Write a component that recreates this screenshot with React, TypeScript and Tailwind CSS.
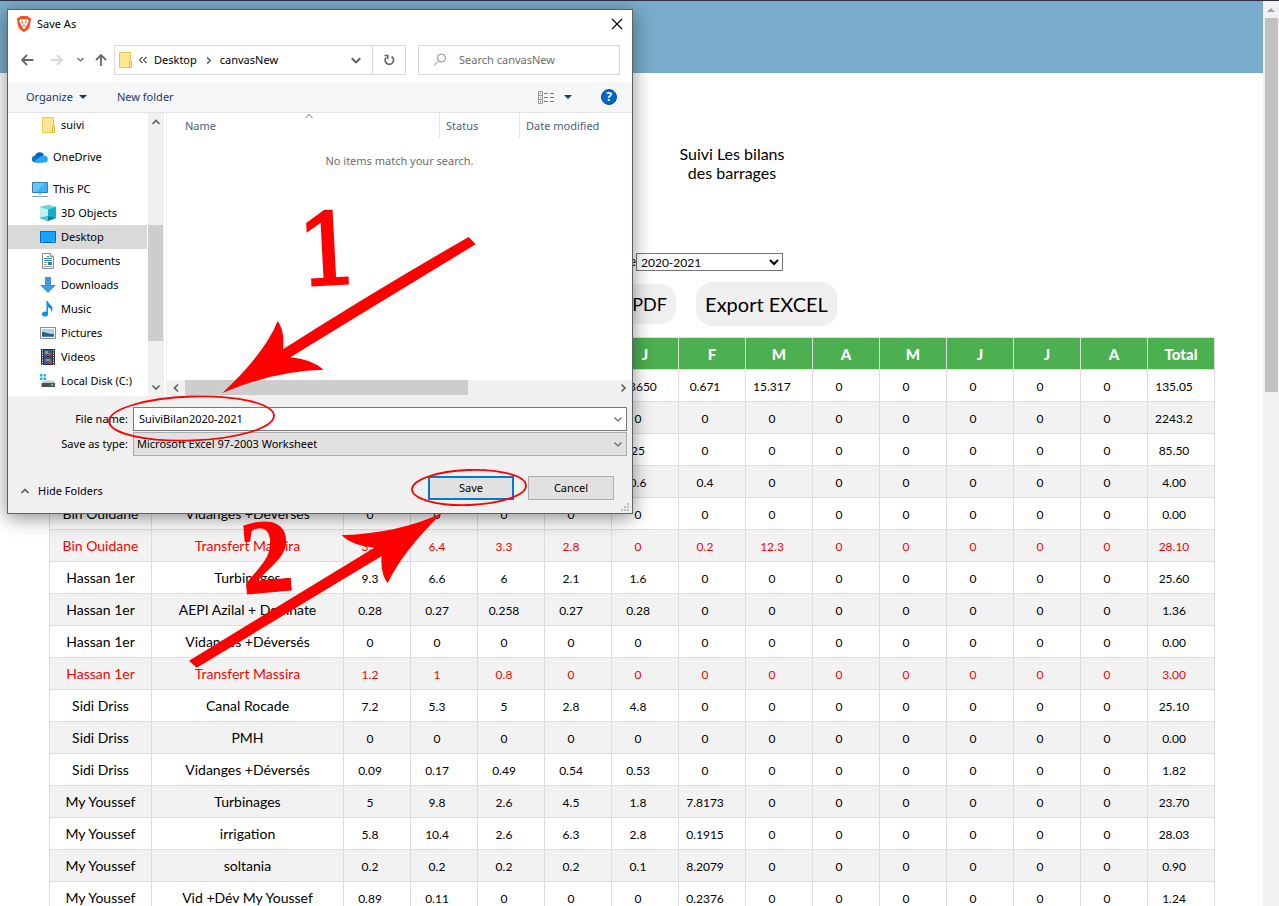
import React from "react";

type Row = { dam: string; use: string; values: string[]; total: string; highlight?: boolean };

const months = ["S", "O", "N", "D", "J", "F", "M", "A", "M", "J", "J", "A"];

const fill = (...v: string[]) => [...v, ...Array(12 - v.length).fill("0")];

const rows: Row[] = [
  { dam: "", use: "", values: fill("", "", "", "", "6.3650", "0.671", "15.3170"), total: "135.05" },
  { dam: "", use: "", values: fill("", "", "", ""), total: "2243.20" },
  { dam: "", use: "", values: fill("", "", "", "", "25"), total: "85.50" },
  { dam: "", use: "", values: fill("", "", "", "", "0.6", "0.4"), total: "4.00" },
  { dam: "Bin Ouidane", use: "Vidanges +Déversés", values: fill(), total: "0.00" },
  { dam: "Bin Ouidane", use: "Transfert Massira", values: fill("3.1", "6.4", "3.3", "2.8", "0", "0.2", "12.3"), total: "28.10", highlight: true },
  { dam: "Hassan 1er", use: "Turbinages", values: fill("9.3", "6.6", "6", "2.1", "1.6"), total: "25.60" },
  { dam: "Hassan 1er", use: "AEPI Azilal + Demnate", values: fill("0.28", "0.27", "0.258", "0.27", "0.28"), total: "1.36" },
  { dam: "Hassan 1er", use: "Vidanges +Déversés", values: fill(), total: "0.00" },
  { dam: "Hassan 1er", use: "Transfert Massira", values: fill("1.2", "1", "0.8"), total: "3.00", highlight: true },
  { dam: "Sidi Driss", use: "Canal Rocade", values: fill("7.2", "5.3", "5", "2.8", "4.8"), total: "25.10" },
  { dam: "Sidi Driss", use: "PMH", values: fill(), total: "0.00" },
  { dam: "Sidi Driss", use: "Vidanges +Déversés", values: fill("0.09", "0.17", "0.49", "0.54", "0.53"), total: "1.82" },
  { dam: "My Youssef", use: "Turbinages", values: fill("5", "9.8", "2.6", "4.5", "1.8", "7.8173"), total: "23.70" },
  { dam: "My Youssef", use: "irrigation", values: fill("5.8", "10.4", "2.6", "6.3", "2.8", "0.1915"), total: "28.03" },
  { dam: "My Youssef", use: "soltania", values: fill("0.2", "0.2", "0.2", "0.2", "0.1", "8.2079"), total: "0.90" },
  { dam: "My Youssef", use: "Vid +Dév My Youssef", values: fill("0.89", "0.11", "0", "0", "0", "0.2376"), total: "1.24" },
];

function BalanceTable() {
  const cell = "w-[38px] bg-transparent text-center text-[12px] leading-4 outline-none block mt-[3px]";
  return (
    <table className="w-full table-fixed border-collapse text-center text-[14px] leading-5">
      <colgroup>
        <col className="w-[102px]" />
        <col className="w-[192px]" />
        {[...months, "Total"].map((_, i) => (
          <col key={i} />
        ))}
      </colgroup>
      <thead>
        <tr className="h-8 bg-[#4caf50] text-[15px] text-white">
          {["", "", ...months, "Total"].map((m, i) => (
            <th key={i} className="border border-[#ddd] font-black">
              {m}
            </th>
          ))}
        </tr>
      </thead>
      <tbody>
        {rows.map((r, i) => (
          <tr key={i} className={r.highlight ? "h-8 text-[#f00] even:bg-[#f2f2f2]" : "h-8 text-black even:bg-[#f2f2f2]"}>
            <td className="border border-[#ddd]">{r.dam}</td>
            <td className="border border-[#ddd]">{r.use}</td>
            {[...r.values, r.total].map((v, j) => (
              <td key={j} className="border border-[#ddd] px-[7px]">
                <input
                  className={cell}
                  aria-label={`${r.dam} ${r.use} ${j < 12 ? months[j] : "Total"}`}
                  defaultValue={v}
                />
              </td>
            ))}
          </tr>
        ))}
      </tbody>
    </table>
  );
}

function Chevron({ dir, className, thin }: { dir: "up" | "down" | "left" | "right"; className?: string; thin?: boolean }) {
  const d = { up: "M1.5 7 5 3.5 8.5 7", down: "M1.5 3.5 5 7l3.5-3.5", left: "M7 1.5 3.5 5 7 8.5", right: "M3.5 1.5 7 5 3.5 8.5" }[dir];
  return (
    <svg
      viewBox="0 0 10 10"
      className={className ?? "size-[10px]"}
      fill="none"
      stroke="#606060"
      strokeWidth={thin ? 1.1 : 1.7}
      aria-hidden="true"
    >
      <path d={d} />
    </svg>
  );
}

const icons: Record<string, React.ReactNode> = {
  folder: (
    <>
      <path d="M2.5 .5h11v15h-11z" fill="#ffe693" stroke="#eac54f" />
      <path d="M12.5 9.5h2v6h-2z" fill="#ffe693" stroke="#e3b93c" />
    </>
  ),
  cloud: (
    <>
      <path d="M3 7a5 5 0 0 1 9-1.5L8 10z" fill="#0364b8" />
      <path d="M3.5 6.4 11 11l-1 2.5H3.500A3.500 3.500 0 0 1 3.500 6.4z" fill="#0078d4" />
      <path d="M10 6.400a4 4 0 0 1 3 .4 3.400 3.400 0 0 1 0 6.700H4.500c-1 0-1.800-.3-2.500-.9z" fill="#28a8ea" />
    </>
  ),
  pc: (
    <>
      <path d="M.5 1.500h15v10H.5z" fill="#3ab3fb" stroke="#3a7ca8" />
      <path d="M1 2h12L4 11H1z" fill="#6fd0ff" opacity=".7" />
      <path d="M6 13h4M0 15.500h16" stroke="#8a9aa8" />
    </>
  ),
  cube: (
    <>
      <path d="M8 0 16 2v11l-8 3-8-3V2z" fill="#2bc3d6" />
      <path d="M8 0 16 2 8 4.500 0 2z" fill="#69d6df" />
      <path d="M0 2l8 2.500V12l-8 1z" fill="#bdf0f2" />
      <path d="M8 4.500 16 2v11l-8-1z" fill="#1aaecb" />
      <path d="M0 13l8-2 8 2-8 3z" fill="#0e7f96" />
      <path d="M0 13l8-2v5z" fill="#52c9cf" />
    </>
  ),
  desktop: (
    <>
      <path d="M.5 2.500h15v11H.5z" fill="#16a4fb" stroke="#0a68b8" />
      <path d="M2 12.500h1M12 12.500h1M14 12.500h1" stroke="#bfe6ff" />
    </>
  ),
  doc: (
    <>
      <path d="M2.500 .5h8l3 3v12h-11z" fill="#fff" stroke="#8a8a8a" />
      <path d="M10.500 .5v3h3" fill="#ddd" stroke="#8a8a8a" />
      <path d="M7 3.500h2M4 5.500h8M4 7.500h8" stroke="#2f8fd0" />
      <path d="M4 9.500h3M4 11.500h3M4 13.500h8" stroke="#8f9ea8" />
      <path d="M8 9h4v3H8z" fill="#2f7ea8" />
    </>
  ),
  download: <path d="M5.500 .5h5v8h4.500L8 15.500 1 8.500h4.500z" fill="#3e9bea" stroke="#2d7cc6" strokeWidth=".8" />,
  music: (
    <>
      <path d="M6.500 0H8c0 3 4.500 4 4.500 7.500 0 1.500-.6 2.600-1.500 3.500.5-2.500-.5-4-3-4.800V13H6.500z" fill="#0f8fe8" />
      <ellipse cx="5" cy="13" rx="3" ry="2.600" fill="#0f8fe8" />
    </>
  ),
  picture: (
    <>
      <path d="M.5 2.500h15v11H.5z" fill="#fff" stroke="#8c8c8c" />
      <path d="M2 4h12v8H2z" fill="#a8d4ec" />
      <path d="M2 7c4 0 5 2 12 2v3H2z" fill="#31646b" />
      <path d="M2 11h12v1H2z" fill="#4d87ad" />
    </>
  ),
  video: (
    <>
      <path d="M1 0h14v16H1z" fill="#333" />
      <path d="M4 1h8v6.500H4z" fill="#345c9c" />
      <path d="M4 8.500h8V15H4z" fill="#345c9c" />
      <path d="M5 2h3v3H5zM6 10h4v2H6z" fill="#c8902c" />
      <path d="M8 4h3v2H8zM9 12h3v2H9z" fill="#bd5437" />
      <path d="M2.500 1v15M13.500 1v15" stroke="#eee" strokeDasharray="1.200 1.200" />
    </>
  ),
  disk: (
    <>
      <path d="M0 1h2.500v2.500H0zM3.500 1H6v2.500H3.500zM0 4.500h2.500V7H0zM3.500 4.500H6V7H3.500z" fill="#16b9ea" />
      <path d="M3.500 7.500h10l2 3H1.500z" fill="#c6cbcf" />
      <path d="M1.500 10h13.500v4H1.500z" fill="#4a4f54" />
      <path d="M11 12h2.500" stroke="#4be36b" strokeWidth="1.500" />
    </>
  ),
};

function Icon({ name }: { name: string }) {
  return (
    <svg viewBox="0 0 16 16" className="size-4 shrink-0" fill="none" aria-hidden="true">
      {icons[name]}
    </svg>
  );
}

function SideItem({ icon, label, nested, active }: { icon: string; label: string; nested?: boolean; active?: boolean }) {
  return (
    <button
      type="button"
      className={
        "flex h-6 w-full items-center gap-[5px] whitespace-nowrap " + (nested ? "pl-8 " : "pl-6 ") + (active ? "bg-[#d9d9d9]" : "")
      }
    >
      <Icon name={icon} />
      {label}
    </button>
  );
}

const folders = [
  ["cube", "3D Objects"],
  ["desktop", "Desktop"],
  ["doc", "Documents"],
  ["download", "Downloads"],
  ["music", "Music"],
  ["picture", "Pictures"],
  ["video", "Videos"],
  ["disk", "Local Disk (C:)"],
];

function SaveDialog() {
  return (
    <section
      role="dialog"
      aria-label="Save As"
      className="absolute left-[7px] top-2 w-[626px] border border-[#5c6468] bg-white font-['Noto_Sans','Open_Sans',sans-serif] text-[11px] leading-4 text-black shadow-[0_4px_18px_rgba(0,0,0,0.45)]"
    >
      <div className="mb-[7px] flex h-7 items-center pl-2 pr-[9px]">
        <svg viewBox="0 0 16 16" className="size-4" aria-hidden="true">
          <path d="M4.500 0h7l1.400 1.500 1.600.2.700 2-.6 1.500-1 6-1.800 2.300L8 16l-3.800-2.500L2.400 11.200l-1-6-.6-1.500.7-2 1.600-.2z" fill="#fb4b1f" />
          <path d="m4.300 3 2 .5L8 3l1.700.5 2-.5 1.300 2-2 3.200.3 1.300-2.300 1.300.8.900L8 13l-1.800-1.300.8-.9-2.300-1.300L5 8.200 3 5z" fill="#fff" />
          <path d="m5 5 2 .7-.3 2.300zM11 5l-2 .7.3 2.300zM6.500 9.200 8 8.600l1.500.6L8 10z" fill="#fb4b1f" />
        </svg>
        <span className="ml-[5px] grow">Save As</span>
        <button type="button" aria-label="Close">
          <svg viewBox="0 0 12 12" className="size-3" stroke="#000" strokeWidth="1.100" aria-hidden="true">
            <path d="m1 1 10 10M11 1 1 11" />
          </svg>
        </button>
      </div>

      <div className="flex h-[30px] items-center pl-3 pr-3">
        <div className="flex w-[94px] items-center">
          <svg viewBox="0 0 94 16" className="h-4 w-[94px]" fill="none" strokeWidth="1.800" aria-hidden="true">
            <path d="M13.500 8H2M7 3 2 8l5 5" stroke="#6a6a6a" />
            <path d="M31 8h11M37 3l5 5-5 5" stroke="#d8d8d8" />
            <path d="m57.500 6 3 3 3-3" stroke="#7a7a7a" strokeWidth="1.500" />
            <path d="M81 14V3M76 8l5-5 5 5" stroke="#6a6a6a" />
          </svg>
        </div>
        <div className="flex h-[30px] w-[292px] border border-[#d9d9d9]">
          <div className="flex grow items-center pl-[2px]">
            <Icon name="folder" />
            <svg viewBox="0 0 10 10" className="ml-[5px] size-[10px]" fill="none" stroke="#555" strokeWidth="1.200" aria-hidden="true">
              <path d="M4.500 2 1.500 5l3 3M8.500 2l-3 3 3 3" />
            </svg>
            <span className="ml-[6px]">Desktop</span>
            <Chevron dir="right" className="mx-[7px] size-[9px]" />
            <span>canvasNew</span>
          </div>
          <button type="button" aria-label="Previous locations" className="flex w-8 items-center justify-center">
            <Chevron dir="down" className="size-3" />
          </button>
          <button type="button" aria-label="Refresh" className="flex w-[33px] items-center justify-center border-l border-[#d9d9d9]">
            <svg viewBox="0 0 12 12" className="size-3" fill="none" stroke="#666" strokeWidth="1.700" aria-hidden="true">
              <path d="M8.500 2.500A4.200 4.200 0 1 1 3 3.600M1.500 1.500h3.200v3.500" />
            </svg>
          </button>
        </div>
        <label className="ml-3 flex h-[30px] grow items-center border border-[#d9d9d9] pl-[14px]">
          <svg viewBox="0 0 14 14" className="size-[14px]" fill="none" stroke="#888" aria-hidden="true">
            <circle cx="8.500" cy="5" r="4" />
            <path d="M5.500 8 .8 12.700" />
          </svg>
          <input aria-label="Search canvasNew" placeholder="Search canvasNew" className="ml-3 w-[150px] outline-none placeholder:text-[#6d6d6d]" />
        </label>
      </div>

      <div className="mt-[7px] flex h-[31px] items-center border-b border-[#e5e5e5] bg-[#f4f6f8] pl-[18px] pr-[15px] text-[#1e395b]">
        <button type="button" className="flex items-center gap-[6px]">
          Organize
          <svg viewBox="0 0 8 4" className="h-1 w-2" fill="#1e395b" aria-hidden="true"><path d="M0 0h8L4 4z" /></svg>
        </button>
        <button type="button" className="ml-[30px] grow text-left">New folder</button>
        <button type="button" aria-label="Change view" className="flex items-center gap-[9px]">
          <svg viewBox="0 0 17 13" className="h-[13px] w-[17px]" fill="none" aria-hidden="true">
            <path d="M.5 .5h4v12h-4zM.5 4.500h4M.5 8.500h4" stroke="#999" />
            <path d="M6 2.500h4M12 2.500h4M6 6.500h4M12 6.500h4M6 10.500h4M12 10.500h4" stroke="#777" />
            <path d="M2 2h1v1H2z" fill="#555" /><path d="M2 6h1v1H2z" fill="#28f" /><path d="M2 10h1v1H2z" fill="#d22" />
          </svg>
          <svg viewBox="0 0 8 4" className="h-1 w-2" fill="#1e395b" aria-hidden="true"><path d="M0 0h8L4 4z" /></svg>
        </button>
        <button type="button" aria-label="Help" className="ml-[29px] flex size-4 items-center justify-center rounded-full border border-[#0a4f9c] bg-[#0066cc] text-[12px] font-bold text-white">
          ?
        </button>
      </div>

      <div className="flex h-[283px]">
        <nav aria-label="Folders" className="w-[139px] shrink-0 overflow-hidden">
          <SideItem icon="folder" label="suivi" nested />
          <div className="my-2"><SideItem icon="cloud" label="OneDrive" /></div>
          <SideItem icon="pc" label="This PC" />
          {folders.map(([icon, label]) => (
            <SideItem key={label} icon={icon} label={label} nested active={label === "Desktop"} />
          ))}
        </nav>
        <div className="ml-px flex w-4 flex-col items-center bg-[#f0f0f0]">
          <div className="flex h-[17px] items-center"><Chevron dir="up" /></div>
          <div className="mt-[95px] h-[116px] w-[15px] self-start bg-[#cdcdcd]" />
          <div className="mb-1 mt-auto flex"><Chevron dir="down" /></div>
        </div>
        <div className="ml-[2px] flex grow flex-col border-l border-[#f0f0f0]">
          <div className="flex h-[25px] items-center text-[#4c607a]">
            <span className="relative w-[272px] pl-[18px]">
              Name
              <svg viewBox="0 0 8 4" className="absolute -top-1 left-[138px] h-1 w-2" fill="none" stroke="#666" aria-hidden="true"><path d="m.5 4 3.500-3.500L7.500 4" /></svg>
            </span>
            <span className="flex h-full w-20 items-center border-l border-[#e5e5e5] pl-[6px]">Status</span>
            <span className="flex h-full grow items-center border-l border-[#e5e5e5] pl-[6px]">Date modified</span>
          </div>
          <p className="mt-[15px] grow text-center text-[#6d6d6d]">No items match your search.</p>
          <div className="flex h-4 items-center bg-[#f0f0f0]">
            <span className="flex w-[18px] pl-1"><Chevron dir="left" /></span>
            <span className="h-[15px] w-[283px] self-start bg-[#cdcdcd]" />
            <span className="ml-auto mr-1"><Chevron dir="right" /></span>
          </div>
        </div>
      </div>

      <form className="bg-[#f0f0f0] pb-[13px] pl-2 pr-[5px] pt-[11px]" onSubmit={(e) => e.preventDefault()}>
        <div className="flex items-center">
          <label htmlFor="filename" className="w-[112px] text-right">File name:</label>
          <div className="ml-[5px] flex h-6 grow items-center border border-[#7a7a7a] bg-white pl-[5px] pr-[3px]">
            <input id="filename" defaultValue="SuiviBilan2020-2021" className="min-w-0 grow bg-transparent outline-none" />
            <Chevron dir="down" thin />
          </div>
        </div>
        <div className="mt-px flex items-center">
          <label htmlFor="filetype" className="w-[112px] text-right">Save as type:</label>
          <div className="ml-[5px] flex h-6 grow items-center border border-[#adadad] bg-[#e1e1e1] pl-[3px] pr-[3px]">
            <select id="filetype" className="min-w-0 grow appearance-none bg-transparent outline-none">
              <option>Microsoft Excel 97-2003 Worksheet</option>
            </select>
            <Chevron dir="down" thin />
          </div>
        </div>
        <div className="mt-5 flex items-center pl-1 pr-[13px]">
          <button type="button" className="mr-auto mt-[5px] flex items-center gap-[8px]">
            <Chevron dir="up" />
            Hide Folders
          </button>
          <button type="submit" className="h-6 w-[86px] border-2 border-[#0078d7] bg-[#e1e1e1]">Save</button>
          <button type="button" className="ml-[14px] h-6 w-[86px] border border-[#adadad] bg-[#e1e1e1]">Cancel</button>
        </div>
      </form>
      <svg viewBox="0 0 8 8" className="absolute bottom-[2px] right-[3px] size-2" fill="#bfbfbf" aria-hidden="true">
        <path d="M6 0h2v2H6zM3 3h2v2H3zM6 3h2v2H6zM0 6h2v2H0zM3 6h2v2H3zM6 6h2v2H6z" />
      </svg>
    </section>
  );
}

function Annotations() {
  return (
    <svg viewBox="0 0 640 700" className="pointer-events-none absolute -top-px left-0 h-[700px] w-[640px]" fill="#f00" aria-hidden="true">
      <path d="M468.700 237 475.700 244.300Q382 301 290.300 357.300 311 359 323.700 369.700 274 371 222.300 393 265 353 277.700 321 285 331 283 349.300 376 290 468.700 237z" />
      <path d="M442.300 512.700Q400 533 341.300 535.300 353 546 374.300 547.700L189 660.700l7.700 7L381.700 556Q380 573 387.700 583.300 402 552 442.300 512.700z" />
      <ellipse cx="191.500" cy="418.500" rx="82.500" ry="22" transform="rotate(-2 191.500 418.500)" fill="none" stroke="#f00" strokeWidth="1.800" />
      <ellipse cx="469" cy="487.500" rx="57" ry="17.500" transform="rotate(-2 469 487.500)" fill="none" stroke="#f00" strokeWidth="1.800" />
      <g stroke="#f00">
        <text x="299" y="284" transform="rotate(-3 331 284)" fontSize="98" strokeWidth="3" fontFamily="DejaVu Serif, serif">1</text>
        <text x="243" y="592" transform="rotate(-5 268 592)" fontSize="106" strokeWidth="1" fontWeight="700" fontFamily="Liberation Serif, serif">2</text>
      </g>
    </svg>
  );
}

export default function App() {
  return (
    <div className="relative flex h-screen overflow-hidden border-t border-[#2f3047] bg-white font-['Lato',sans-serif] text-black">
      <main className="min-w-0 grow">
        <header className="h-[72px] bg-[#79acca]" />
        <div className="flex justify-center pt-[71px]">
          <div className="w-[201px]" />
          <h1 className="w-[112px] text-center text-[16px] leading-[19px]">Suivi Les bilans des barrages</h1>
        </div>
        <div className="mt-[71px] flex h-[18px] items-center justify-center text-[13px]">
          <label htmlFor="year" className="w-[156px] text-right">Année</label>
          <select id="year" className="h-[18px] w-[147px] border border-[#767676] bg-white text-[12px] leading-4">
            <option>2020-2021</option>
          </select>
        </div>
        <div className="mt-[11px] flex items-center justify-center gap-5">
          <div className="w-[120px]" />
          <button type="button" className="h-10 w-[110px] whitespace-nowrap rounded-[16px] bg-[#efefef] text-[18px]">Export PDF</button>
          <button type="button" className="h-11 w-[141px] whitespace-nowrap rounded-[16px] bg-[#efefef] text-[20px]">Export EXCEL</button>
        </div>
        <div className="mt-[11px] pl-[49px] pr-12">
          <BalanceTable />
        </div>
      </main>
      <div className="flex w-4 shrink-0 flex-col items-center bg-[#f1f1f1]" aria-hidden="true">
        <svg viewBox="0 0 8 4" className="mt-[7px] h-1 w-2" fill="#a3a3a3"><path d="M4 0 8 4H0z" /></svg>
        <div className="mt-[6px] h-[374px] w-[13px] bg-[#c1c1c1]" />
      </div>
      <SaveDialog />
      <Annotations />
    </div>
  );
}
